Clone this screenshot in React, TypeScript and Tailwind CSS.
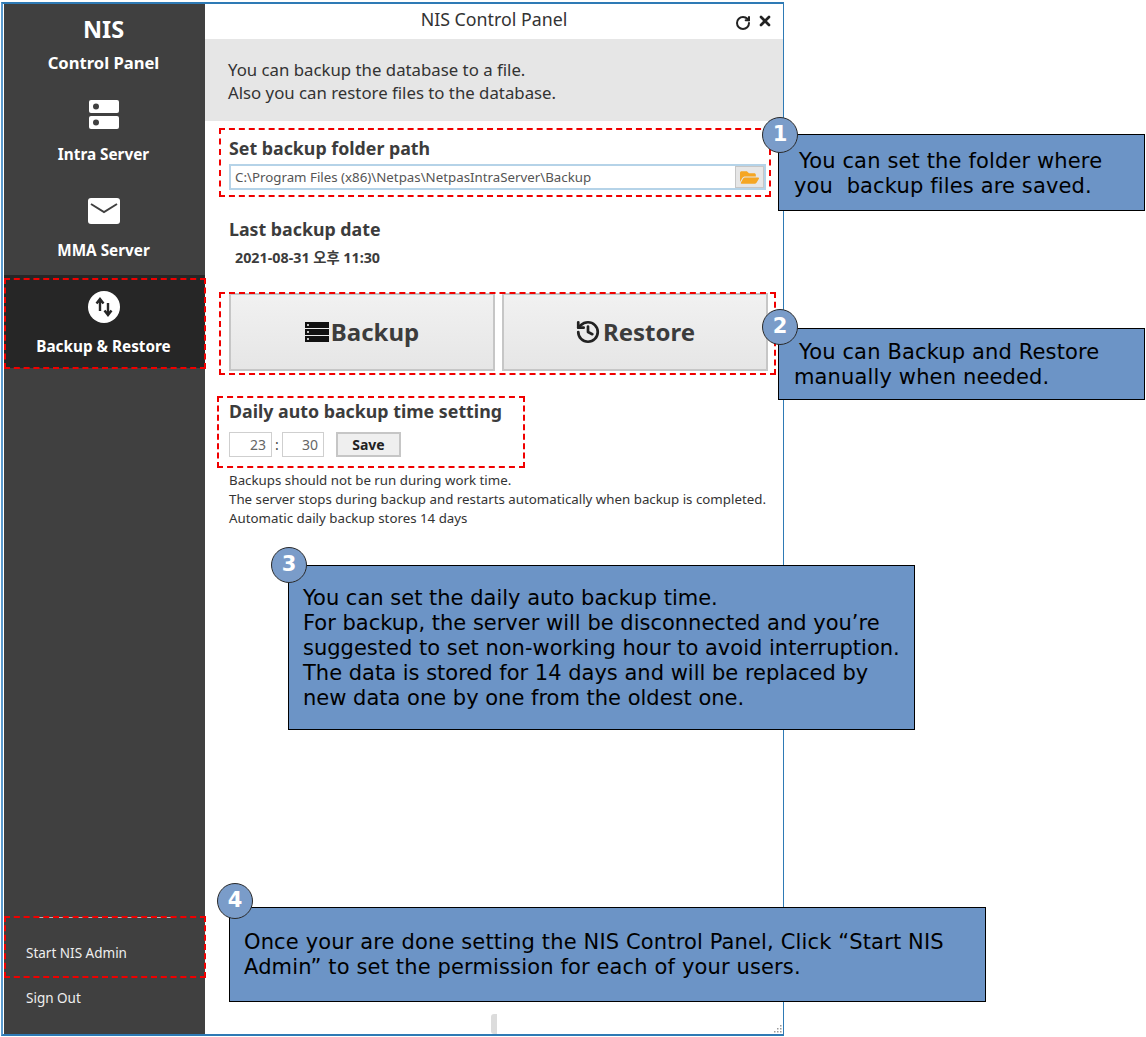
import type { ReactNode } from "react";
import { History, RotateCw, X } from "lucide-react";
import { FaFolderOpen } from "react-icons/fa";

const notes = [
  "Backups should not be run during work time.",
  "The server stops during backup and restarts automatically when backup is completed.",
  "Automatic daily backup stores 14 days",
];

function ServerIcon() {
  return (
    <svg width="32" height="32" viewBox="0 0 32 32" className="block">
      <rect x="1" y="1" width="30" height="13" rx="2" fill="#fff" />
      <rect x="1" y="17" width="30" height="13" rx="2" fill="#fff" />
      <circle cx="8" cy="7.5" r="3" fill="#404040" />
      <circle cx="8" cy="23.5" r="3" fill="#404040" />
    </svg>
  );
}

function MailIcon() {
  return (
    <svg width="32" height="26" viewBox="0 0 32 26" className="block">
      <rect x="0" y="0" width="32" height="26" rx="3" fill="#fff" />
      <path d="M3 6l13 8 13-8" fill="none" stroke="#404040" strokeWidth="2" />
    </svg>
  );
}

function SwapIcon() {
  return (
    <svg width="32" height="32" viewBox="0 0 32 32" className="block">
      <circle cx="16" cy="16" r="16" fill="#fff" />
      <path d="M12 20V9M8.5 12.5L12 8l3.5 4.5" fill="none" stroke="#262626" strokeWidth="2.4" />
      <path d="M20 12v11M16.5 19.5L20 24l3.5-4.5" fill="none" stroke="#262626" strokeWidth="2.4" />
    </svg>
  );
}

function StackIcon() {
  return (
    <svg width="24" height="20" viewBox="0 0 24 20" className="block">
      {[0, 7, 14].map((y) => (
        <g key={y}>
          <rect x="0" y={y} width="24" height="6" fill="#111" />
          <circle cx="3" cy={y + 3} r="1" fill="#fff" />
        </g>
      ))}
    </svg>
  );
}

function Grip() {
  return (
    <svg width="10" height="10" viewBox="0 0 10 10" className="block">
      {[[8, 1], [5, 4], [8, 4], [2, 7], [5, 7], [8, 7]].map(([x, y]) => (
        <rect key={`${x}-${y}`} x={x} y={y} width="1.5" height="1.5" fill="#999" />
      ))}
    </svg>
  );
}

function NavItem({ icon, label, active }: { icon: ReactNode; label: string; active?: boolean }) {
  return (
    <div className={`flex flex-col items-center pr-[2px] pt-[16px] ${active ? "h-[93px] bg-[#262626]" : "h-[96px]"}`}>
      <div className="flex h-[32px] items-center justify-center">{icon}</div>
      <div className="mt-[13px] text-[15.3px] font-bold leading-[20px] text-white">{label}</div>
    </div>
  );
}

function Callout({ className, children }: { className: string; children: ReactNode }) {
  return (
    <div className={`absolute border border-black bg-[#6c94c6] font-['DejaVu_Sans',sans-serif] text-[21px] leading-[25px] text-black ${className}`}>
      {children}
    </div>
  );
}

function Badge({ className, n }: { className: string; n: number }) {
  return (
    <div className={`absolute flex h-[36px] w-[36px] items-center justify-center rounded-full border border-[#2a2a2a] bg-[#7a9cc9] font-['DejaVu_Sans',sans-serif] text-[21px] font-bold text-white ${className}`}>
      {n}
    </div>
  );
}

function Dashed({ className }: { className: string }) {
  return <div className={`pointer-events-none absolute border-2 border-dashed border-[#f00000] ${className}`} />;
}

function BigButton({ icon, label }: { icon: ReactNode; label: string }) {
  return (
    <div className="flex h-[78px] w-[266px] items-center justify-center gap-[2px] border-2 border-[#c6c6c6] bg-gradient-to-b from-[#f1f1f1] to-[#e6e6e6] text-[24px] font-bold text-[#3c3c3c]">
      {icon}
      <span>{label}</span>
    </div>
  );
}

export default function App() {
  return (
    <div className="relative h-[1037px] w-[1146px] overflow-hidden bg-white font-['Noto_Sans',sans-serif]">
      <div className="ml-[1px] mt-[2px] flex h-[1034px] w-[783px] border-2 border-r border-[#2e7ab5] border-l-[#5a9bd0] bg-white pl-[1px]">
        <aside className="flex w-[201px] shrink-0 flex-col bg-[#404040] text-white">
          <div className="flex h-[79px] flex-col items-center pr-[2px] pt-[7px]">
            <div className="text-[23.5px] font-bold leading-[36px]">NIS</div>
            <div className="mt-[5px] text-[16.6px] font-bold leading-[22px]">Control Panel</div>
          </div>
          <NavItem icon={<ServerIcon />} label="Intra Server" />
          <NavItem icon={<MailIcon />} label="MMA Server" />
          <NavItem icon={<SwapIcon />} label="Backup & Restore" active />
          <div className="flex-1" />
          <div className="mx-[30px] h-[1px] bg-[#b5b5b5]" />
          <div className="mb-[26px] mt-[25px] flex flex-col gap-[25px] pl-[22px] text-[13.5px] leading-[20px] text-[#efefef]">
            <div>Start NIS Admin</div>
            <div>Sign Out</div>
          </div>
        </aside>

        <main className="relative flex min-w-0 flex-1 flex-col">
          <div className="relative flex h-[35px] shrink-0 items-start justify-center pt-[3px] text-[17.8px] leading-[24px] text-[#333]">
            NIS Control Panel
            <div className="absolute right-[10px] top-[9px] flex items-start gap-[6px] text-[#222]">
              <RotateCw size={16} strokeWidth={3} className="mt-[2px]" />
              <X size={16} strokeWidth={4} />
            </div>
          </div>
          <div className="h-[82px] shrink-0 bg-[#e6e6e6] pl-[23px] pt-[19px] text-[16.8px] leading-[23px] text-[#333]">
            <div>You can backup the database to a file.</div>
            <div>Also you can restore files to the database.</div>
          </div>

          <div className="flex flex-col pl-[24px] pr-[14px] pt-[14px]">
            <div className="text-[17.8px] font-bold leading-[26px] text-[#3c3c3c]">Set backup folder path</div>
            <div className="mt-[3px] flex h-[26px] w-[537px] items-center justify-between border-2 border-[#b5d3e8] pl-[4px] text-[13.3px] text-[#555]">
              <span className="pt-[1px]">C:\Program Files (x86)\Netpas\NetpasIntraServer\Backup</span>
              <div className="flex h-[22px] w-[29px] items-center justify-center border border-[#c6c6c6] bg-[#e6e6e6]">
                <FaFolderOpen size={19} color="#f5a623" />
              </div>
            </div>

            <div className="mt-[26px] text-[17.8px] font-bold leading-[26px] text-[#3c3c3c]">Last backup date</div>
            <div className="mt-[6px] pl-[6px] font-['Noto_Sans','Noto_Sans_CJK_KR',sans-serif] text-[14.3px] font-bold leading-[20px] text-[#3c3c3c]">
              2021-08-31 오후 11:30
            </div>

            <div className="mt-[25px] flex gap-[7px]">
              <BigButton icon={<StackIcon />} label="Backup" />
              <BigButton icon={<History size={26} strokeWidth={2.5} className="text-[#222]" />} label="Restore" />
            </div>

            <div className="mt-[27px] text-[17.8px] font-bold leading-[26px] text-[#3c3c3c]">Daily auto backup time setting</div>
            <div className="mt-[8px] flex items-center text-[14px]">
              <div className="flex h-[25px] w-[43px] items-center justify-end border border-[#cfcfcf] pr-[5px] text-[#666]">23</div>
              <div className="w-[10px] text-center leading-[20px] text-[#444]">:</div>
              <div className="flex h-[25px] w-[42px] items-center justify-end border border-[#cfcfcf] pr-[5px] text-[#666]">30</div>
              <div className="ml-[12px] flex h-[25px] w-[65px] items-center justify-center border-2 border-[#c6c6c6] bg-[#efefef] font-bold text-[#222]">Save</div>
            </div>
            <div className="mt-[14px] text-[13.3px] leading-[19px] text-[#333]">
              {notes.map((n) => (
                <div key={n} className="whitespace-nowrap">{n}</div>
              ))}
            </div>
          </div>

          <div className="flex-1" />
          <div className="flex h-[22px] shrink-0 items-end justify-between pr-[1px]">
            <div className="ml-[286px] h-[20px] w-[6px] rounded-l-[3px] bg-[#dcdcdc]" />
            <Grip />
          </div>
        </main>
      </div>

      <Dashed className="left-[4px] top-[278px] h-[91px] w-[202px]" />
      <Dashed className="left-[4px] top-[916px] h-[62px] w-[202px]" />
      <Dashed className="left-[219px] top-[128px] h-[69px] w-[552px]" />
      <Dashed className="left-[219px] top-[292px] h-[83px] w-[557px]" />
      <Dashed className="left-[217px] top-[396px] h-[72px] w-[308px]" />

      <Callout className="left-[778px] top-[134px] h-[77px] w-[367px] pl-[15px] pt-[14px] tracking-[0.14px]">
        <div className="ml-[5px] whitespace-pre">You can set the folder where</div>
        <div className="whitespace-pre">{"you  backup files are saved."}</div>
      </Callout>
      <Callout className="left-[778px] top-[328px] h-[72px] w-[367px] pl-[15px] pt-[11px] tracking-[0.14px]">
        <div className="ml-[5px] whitespace-pre">You can Backup and Restore</div>
        <div className="whitespace-pre">manually when needed.</div>
      </Callout>
      <Callout className="left-[288px] top-[565px] h-[165px] w-[627px] pl-[14px] pt-[20px]">
        <div>You can set the daily auto backup time.</div>
        <div>For backup, the server will be disconnected and you’re</div>
        <div>suggested to set non-working hour to avoid interruption.</div>
        <div>The data is stored for 14 days and will be replaced by</div>
        <div>new data one by one from the oldest one.</div>
      </Callout>
      <Callout className="left-[229px] top-[907px] h-[95px] w-[757px] pl-[14px] pt-[22px] tracking-[0.14px]">
        <div>Once your are done setting the NIS Control Panel, Click “Start NIS</div>
        <div>Admin” to set the permission for each of your users.</div>
      </Callout>

      <Badge className="left-[762px] top-[117px]" n={1} />
      <Badge className="left-[762px] top-[309px]" n={2} />
      <Badge className="left-[271px] top-[547px]" n={3} />
      <Badge className="left-[217px] top-[883px]" n={4} />
    </div>
  );
}
